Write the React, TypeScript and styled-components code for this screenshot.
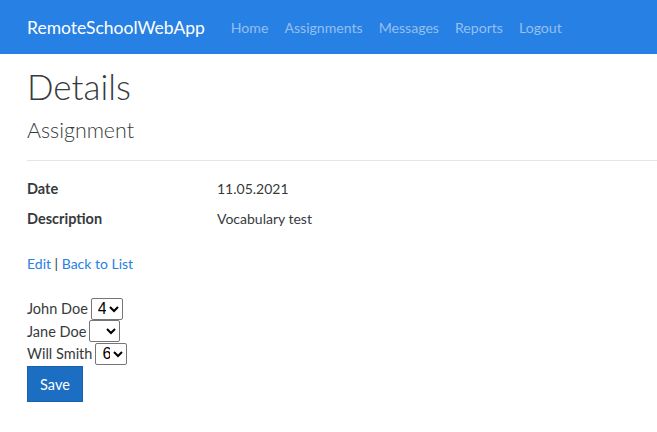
import React from "react";
import styled, { createGlobalStyle } from "styled-components";

const GlobalStyle = createGlobalStyle`
  html, body { margin: 0; padding: 0; background: #fff; }
  body {
    font-family: Lato, "Noto Sans", sans-serif;
    font-size: 14px;
    color: #373a3c;
  }
`;

const Navbar = styled.nav`
  height: 54px;
  background: #2780e3;
  display: flex;
  align-items: center;
  padding: 0 27px;
  box-sizing: border-box;
`;

const Brand = styled.a`
  color: #fff;
  font-size: 17.5px;
  margin-right: 18px;
  text-decoration: none;
`;

const NavList = styled.ul`
  display: flex;
  list-style: none;
  margin: 0;
  padding: 0;
`;

const NavLink = styled.a`
  display: block;
  padding: 8px;
  color: rgba(255, 255, 255, 0.5);
  font-size: 14.1px;
  text-decoration: none;
`;

const Main = styled.main`
  padding: 0 0 0 27px;
`;

const Title = styled.h1`
  margin: 11px 0 0;
  font-size: 35px;
  font-weight: 300;
  line-height: 1.2;
  color: #373a3c;
`;

const Subtitle = styled.h4`
  margin: 11px 0 0;
  font-size: 21.4px;
  font-weight: 300;
  line-height: 1.2;
  color: #373a3c;
`;

const Rule = styled.hr`
  margin: 16px 0 17px;
  border: 0;
  border-top: 1px solid #e5e5e5;
`;

const DetailList = styled.dl`
  display: grid;
  grid-template-columns: 190px 1fr;
  row-gap: 9px;
  margin: 0 0 24px;
`;

const Term = styled.dt`
  font-weight: 700;
  font-size: 14.5px;
  margin: 0;
  line-height: 21px;
`;

const Def = styled.dd`
  margin: 0;
  line-height: 21px;
`;

const Links = styled.div`
  margin-bottom: 24px;
  line-height: 21px;
`;

const Link = styled.a`
  color: #2780e3;
  text-decoration: none;
`;

const GradeForm = styled.form`
  display: flex;
  flex-direction: column;
  align-items: flex-start;
`;

const StudentRow = styled.div`
  display: flex;
  align-items: center;
  gap: 3px;
  height: 22.5px;
  font-size: 14.5px;
`;

const GradeSelect = styled.select<{ $w: number }>`
  width: ${(p) => p.$w}px;
  height: 22px;
  font-family: Arial, "Liberation Sans", sans-serif;
  font-size: 16px;
  color: #000;
  background: #fff;
  border: 1px solid #767676;
  border-radius: 2px;
  padding: 0 0 0 2px;
`;

const SaveButton = styled.button`
  margin-top: 1px;
  width: 56px;
  height: 36px;
  background: #1b6ec2;
  border: 1px solid #1861ac;
  color: #fff;
  font-family: inherit;
  font-size: 14.5px;
  padding: 0;
  cursor: pointer;
`;

const students = [
  { name: "John Doe", grade: "4", w: 32 },
  { name: "Jane Doe", grade: "", w: 31 },
  { name: "Will Smith", grade: "6", w: 32 },
];

export default function App() {
  return (
    <>
      <GlobalStyle />
      <Navbar>
        <Brand href="#">RemoteSchoolWebApp</Brand>
        <NavList>
          {["Home", "Assignments", "Messages", "Reports", "Logout"].map((l) => (
            <li key={l}>
              <NavLink href="#">{l}</NavLink>
            </li>
          ))}
        </NavList>
      </Navbar>
      <Main>
        <Title>Details</Title>
        <Subtitle>Assignment</Subtitle>
        <Rule />
        <DetailList>
          <Term>Date</Term>
          <Def>11.05.2021</Def>
          <Term>Description</Term>
          <Def>Vocabulary test</Def>
        </DetailList>
        <Links>
          <Link href="#">Edit</Link> | <Link href="#">Back to List</Link>
        </Links>
        <GradeForm>
          {students.map((s) => (
            <StudentRow key={s.name}>
              <span>{s.name}</span>
              <GradeSelect $w={s.w} defaultValue={s.grade}>
                <option value=""></option>
                {["1", "2", "3", "4", "5", "6"].map((g) => (
                  <option key={g} value={g}>
                    {g}
                  </option>
                ))}
              </GradeSelect>
            </StudentRow>
          ))}
          <SaveButton type="button">Save</SaveButton>
        </GradeForm>
      </Main>
    </>
  );
}
